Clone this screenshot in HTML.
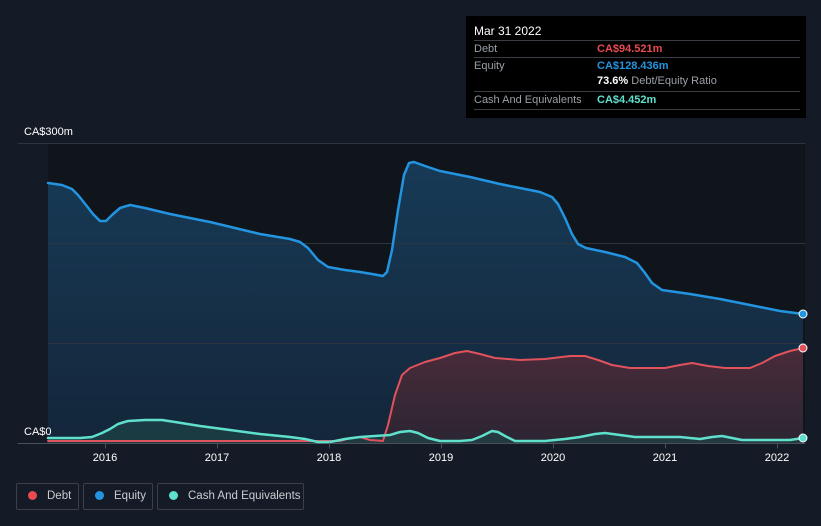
<!DOCTYPE html><html><head><style>
body{margin:0;width:821px;height:526px;background:#151b26;font-family:"Liberation Sans",sans-serif;overflow:hidden;position:relative}
.tt{position:absolute;left:466px;top:16px;width:340px;height:102px;background:#000;color:#fff;font-size:11px}
.r{position:absolute;left:8px;width:326px;border-top:1px solid #3a3e44;height:17px;line-height:17px;color:#9aa0a6}
.leg{position:absolute;top:483px;height:27px;border:1px solid #3a3f48;border-radius:2px;color:#c8ccd2;font-size:11.5px;line-height:25px;box-sizing:border-box;white-space:nowrap}
.leg i{display:inline-block;width:9px;height:9px;border-radius:50%;margin:0 10px 0 11px;vertical-align:-1px}
</style></head><body>
<svg width="821" height="526" style="position:absolute;left:0;top:0" stroke-linejoin="round" stroke-linecap="round">
<defs>
<linearGradient id="ge" x1="0" y1="0" x2="0" y2="1"><stop offset="0" stop-color="#173a56"/><stop offset="1" stop-color="#14263a"/></linearGradient>
<linearGradient id="gd" x1="0" y1="0" x2="0" y2="1"><stop offset="0" stop-color="#4a2b3a"/><stop offset="1" stop-color="#2c2532"/></linearGradient>
</defs>
<rect x="48" y="143" width="757" height="300" fill="#10141b"/>
<path d="M48,183 L62,185 L72,189 L78,195 L86,205 L93,214 L100,221 L106,221 L112,215 L120,208 L130,205 L145,208 L170,214 L210,222 L260,234 L290,239 L300,242 L308,248 L318,260 L328,267 L345,270 L360,272 L372,274 L383,276 L387,272 L392,250 L398,210 L404,175 L409,163 L414,162 L425,166 L440,171 L470,177 L500,184 L520,188 L540,192 L552,197 L558,204 L565,218 L572,234 L578,244 L586,248 L605,252 L625,257 L637,263 L645,273 L652,283 L662,290 L690,294 L720,299 L750,305 L780,311 L803,314 L803,443 L48,443Z" fill="url(#ge)"/>
<path d="M48,441 L383,441 L388,425 L395,395 L402,375 L410,368 L425,362 L440,358 L455,353 L467,351 L480,354 L495,358 L520,360 L545,359 L570,356 L585,356 L598,360 L612,365 L630,368 L665,368 L680,365 L692,363 L708,366 L725,368 L750,368 L762,363 L775,356 L790,351 L803,348 L803,443 L48,443Z" fill="url(#gd)"/>
<path d="M48,438 L80,438 L92,437 L102,433 L110,429 L118,424 L128,421 L145,420 L162,420 L175,422 L200,426 L230,430 L260,434 L290,437 L305,439 L318,442 L330,442 L345,439 L360,437 L390,435 L400,432 L410,431 L418,433 L428,438 L440,441 L460,441 L472,440 L482,436 L492,431 L498,432 L505,436 L515,441 L545,441 L565,439 L580,437 L595,434 L605,433 L620,435 L635,437 L680,437 L700,439 L712,437 L722,436 L732,438 L742,440 L790,440 L803,438 L803,443 L48,443Z" fill="#1f4a4a" opacity=".6"/>
<g stroke="#2e343e" stroke-width="1"><line x1="18" y1="143.5" x2="805" y2="143.5"/><line x1="48" y1="243.5" x2="805" y2="243.5"/><line x1="48" y1="343.5" x2="805" y2="343.5"/><line x1="18" y1="443.5" x2="805" y2="443.5" stroke="#4a505a"/></g>
<path d="M48,183 L62,185 L72,189 L78,195 L86,205 L93,214 L100,221 L106,221 L112,215 L120,208 L130,205 L145,208 L170,214 L210,222 L260,234 L290,239 L300,242 L308,248 L318,260 L328,267 L345,270 L360,272 L372,274 L383,276 L387,272 L392,250 L398,210 L404,175 L409,163 L414,162 L425,166 L440,171 L470,177 L500,184 L520,188 L540,192 L552,197 L558,204 L565,218 L572,234 L578,244 L586,248 L605,252 L625,257 L637,263 L645,273 L652,283 L662,290 L690,294 L720,299 L750,305 L780,311 L803,314" fill="none" stroke="#2394e0" stroke-width="2.5"/>
<path d="M48,441 L340,441 L350,438 L360,437 L370,440 L383,441 L388,425 L395,395 L402,375 L410,368 L425,362 L440,358 L455,353 L467,351 L480,354 L495,358 L520,360 L545,359 L570,356 L585,356 L598,360 L612,365 L630,368 L665,368 L680,365 L692,363 L708,366 L725,368 L750,368 L762,363 L775,356 L790,351 L803,348" fill="none" stroke="#e0525c" stroke-width="2"/>
<path d="M48,438 L80,438 L92,437 L102,433 L110,429 L118,424 L128,421 L145,420 L162,420 L175,422 L200,426 L230,430 L260,434 L290,437 L305,439 L318,442 L330,442 L345,439 L360,437 L390,435 L400,432 L410,431 L418,433 L428,438 L440,441 L460,441 L472,440 L482,436 L492,431 L498,432 L505,436 L515,441 L545,441 L565,439 L580,437 L595,434 L605,433 L620,435 L635,437 L680,437 L700,439 L712,437 L722,436 L732,438 L742,440 L790,440 L803,438" fill="none" stroke="#5fe0cc" stroke-width="2.5"/>
<circle cx="803" cy="314" r="4" fill="#2394e0" stroke="#fff" stroke-width="1"/>
<circle cx="803" cy="348" r="4" fill="#e0525c" stroke="#fff" stroke-width="1"/>
<circle cx="803" cy="438" r="4" fill="#5fe0cc" stroke="#fff" stroke-width="1"/>
<g stroke="#4a505a"><line x1="105.5" y1="443" x2="105.5" y2="448"/><line x1="217.5" y1="443" x2="217.5" y2="448"/><line x1="329.5" y1="443" x2="329.5" y2="448"/><line x1="441.5" y1="443" x2="441.5" y2="448"/><line x1="553.5" y1="443" x2="553.5" y2="448"/><line x1="665.5" y1="443" x2="665.5" y2="448"/><line x1="777.5" y1="443" x2="777.5" y2="448"/></g>
<g fill="#fff" font-size="11" font-family="Liberation Sans,sans-serif" text-anchor="middle"><text x="105" y="461">2016</text><text x="217" y="461">2017</text><text x="329" y="461">2018</text><text x="441" y="461">2019</text><text x="553" y="461">2020</text><text x="665" y="461">2021</text><text x="777" y="461">2022</text></g>
<g fill="#fff" font-size="11" font-family="Liberation Sans,sans-serif"><text x="24" y="135">CA$300m</text><text x="24" y="435">CA$0</text></g>
</svg>
<div class="tt">
<div style="position:absolute;left:8px;top:8px;font-size:12px">Mar 31 2022</div>
<div class="r" style="top:24px">Debt<span style="position:absolute;left:123px;color:#e84a50;font-weight:bold">CA$94.521m</span></div>
<div class="r" style="top:41px">Equity<span style="position:absolute;left:123px;color:#2394e0;font-weight:bold">CA$128.436m</span></div>
<div style="position:absolute;left:131px;top:59px;color:#9aa0a6"><b style="color:#fff">73.6%</b> Debt/Equity Ratio</div>
<div class="r" style="top:75px">Cash And Equivalents<span style="position:absolute;left:123px;color:#5fe0cc;font-weight:bold">CA$4.452m</span></div>
<div class="r" style="top:93px;height:0"></div>
</div>
<div class="leg" style="left:16px;width:63px"><i style="background:#e84a50"></i>Debt</div>
<div class="leg" style="left:83px;width:70px"><i style="background:#2394e0"></i>Equity</div>
<div class="leg" style="left:157px;width:147px"><i style="background:#5fe0cc"></i>Cash And Equivalents</div>
</body></html>
